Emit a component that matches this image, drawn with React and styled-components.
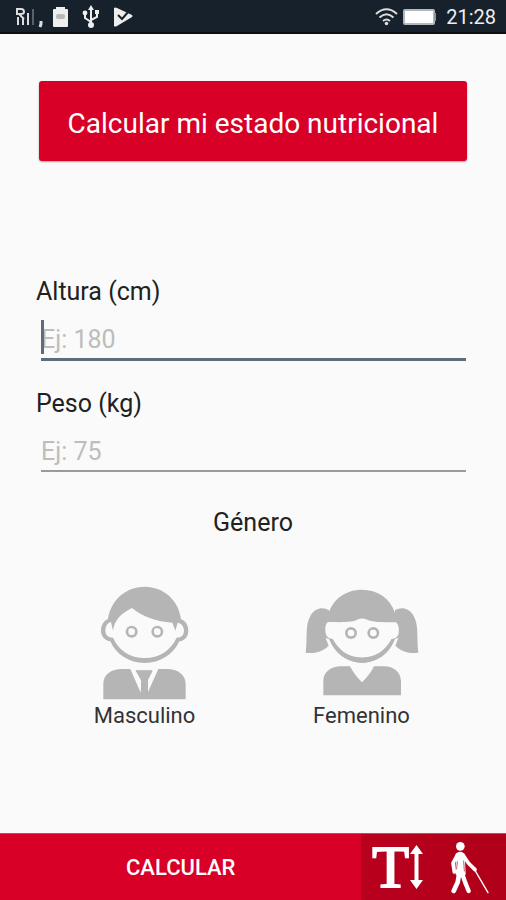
import React, { useState } from 'react'
import styled, { createGlobalStyle } from 'styled-components'

const GlobalStyle = createGlobalStyle`
  * {
    box-sizing: border-box;
  }
  body {
    margin: 0;
    background: #fafafa;
    font-family: Roboto, "Liberation Sans", sans-serif;
  }
  button {
    border: none;
    padding: 0;
    font-family: inherit;
    cursor: pointer;
  }
`

const Screen = styled.div`
  display: flex;
  flex-direction: column;
  min-height: 100vh;
`

const StatusBar = styled.header`
  display: flex;
  justify-content: space-between;
  align-items: center;
  height: 34px;
  padding: 2px 10px 0 16px;
  background: #17212b;
  border-bottom: 2px solid #0a0f14;
  color: #eee;
`

const StatusGroup = styled.div`
  display: flex;
  align-items: center;
  gap: ${({ $gap }) => $gap}px;
`

const Clock = styled.span`
  margin-left: 6px;
  font-size: 20px;
  line-height: 30px;
`

const Content = styled.main`
  flex: 1;
  display: flex;
  flex-direction: column;
  padding: 47px 36px 24px;
`

const TitleButton = styled.button`
  height: 80px;
  margin: 0 3px 113px;
  padding-top: 4px;
  background: #d80027;
  border-radius: 3px;
  box-shadow: 0 1px 2px rgba(0, 0, 0, 0.35);
  color: #fff;
  font-size: 28px;
`

const Field = styled.div`
  display: flex;
  flex-direction: column;
  height: 112px;
`

const FieldLabel = styled.label`
  color: #212121;
  font-size: 25px;
  line-height: 36px;
`

const InputWrap = styled.div`
  position: relative;
  margin: 6px 4px 0 5px;
`

const NumberInput = styled.input`
  display: block;
  width: 100%;
  height: ${({ $active }) => ($active ? 45 : 44)}px;
  padding: 4px 0 0;
  border: none;
  border-bottom: ${({ $active }) => ($active ? '3px solid #5f6d7a' : '2px solid #9a9a9a')};
  border-radius: 0;
  outline: none;
  background: transparent;
  color: #212121;
  caret-color: transparent;
  font-family: inherit;
  font-size: 25px;

  &::placeholder {
    color: #bdbdbd;
    opacity: 1;
  }
`

const Caret = styled.span`
  position: absolute;
  left: 0;
  top: 4px;
  width: 3px;
  height: 34px;
  background: #5f6d7a;
`

const GenderGroup = styled.fieldset`
  margin: 7px 0 0;
  padding: 0;
  border: none;
`

const GenderTitle = styled.legend`
  width: 100%;
  padding: 0;
  color: #212121;
  font-size: 25px;
  line-height: 36px;
  text-align: center;
`

const GenderRow = styled.div`
  display: grid;
  grid-template-columns: 1fr 1fr;
  margin-top: 43px;
`

const GenderOption = styled.label`
  display: flex;
  flex-direction: column;
  align-items: center;
  color: #333;
  font-size: 22px;
  line-height: 32px;
  cursor: pointer;

  svg {
    display: block;
  }
`

const HiddenRadio = styled.input`
  position: absolute;
  opacity: 0;
  pointer-events: none;
`

const Figure = styled.span`
  display: flex;
  align-items: flex-end;
  height: 116px;
  padding-bottom: ${({ $lift }) => $lift}px;
`

const BottomBar = styled.footer`
  display: flex;
  height: 67px;
  background: #d80027;
  border-top: 1px solid #c24a58;
`

const CalculateButton = styled.button`
  flex: 5;
  background: #d80027;
  color: #fff;
  font-size: 22px;
  font-weight: 500;
`

const Tools = styled.div`
  flex: 2;
  display: grid;
  grid-template-columns: 1fr 1fr;
  background: linear-gradient(to right, #b9001e, #b0001a);
`

const ToolButton = styled.button`
  display: flex;
  justify-content: center;
  align-items: center;
  gap: 1px;
  background: transparent;
  color: #fff;
`

const BigLetter = styled.span`
  font-family: "Liberation Serif", serif;
  font-size: 60px;
  line-height: 64px;
  -webkit-text-stroke: 2px #fff;
`

const BG = '#fafafa'
const GREY = '#b5b5b5'

function SignalIcon() {
  return (
    <svg width="29" height="22" viewBox="0 0 29 22" fill="none" stroke="#ddd" aria-hidden="true">
      <path d="M1 9V3H5Q8 3 8 6Q8 8 5 8H3L8 13" strokeWidth="2" />
      <path d="M2 19V11M7 19V12M12 19V7" strokeWidth="2" />
      <path d="M17 19V3" stroke="#56616b" strokeWidth="2" />
      <path d="M25 15V18L24 21" strokeWidth="3" />
    </svg>
  )
}

function CardIcon() {
  return (
    <svg width="15" height="20" viewBox="0 0 15 20" aria-hidden="true">
      <path d="M3 0H12V2H14Q15 2 15 3V19Q15 20 14 20H1Q0 20 0 19V3Q0 2 1 2H3Z" fill="#eee" />
      <rect x="3" y="7" width="9" height="5" rx="2" fill="#b9b9b9" />
    </svg>
  )
}

function UsbIcon() {
  return (
    <svg width="18" height="24" viewBox="0 0 18 24" fill="none" stroke="#eee" strokeWidth="2" aria-hidden="true">
      <path d="M9 20V3M9 17L3 13V8M9 15L15 12V7" />
      <path d="M9 0L12 5H6Z" fill="#eee" stroke="none" />
      <circle cx="9" cy="20" r="3" fill="#eee" stroke="none" />
      <circle cx="3" cy="8" r="2.4" fill="#eee" stroke="none" />
      <rect x="13" y="5" width="4" height="4" fill="#eee" stroke="none" />
    </svg>
  )
}

function PlayIcon() {
  return (
    <svg width="19" height="20" viewBox="0 0 19 20" aria-hidden="true">
      <path d="M0 1Q1 0 3 1L18 8Q19 9 18 10L3 19Q1 20 0 19Z" fill="#eee" />
      <path d="M4 8L8 12L15 4" fill="none" stroke="#17212b" strokeWidth="2" />
    </svg>
  )
}

function WifiIcon() {
  return (
    <svg width="23" height="18" viewBox="0 0 23 18" fill="none" stroke="#ddd" strokeWidth="2" aria-hidden="true">
      <path d="M1 6Q11.5 -3.500 22 6" />
      <path d="M4.500 9.500Q11.500 3 18.500 9.500" />
      <path d="M8 13Q11.500 10 15 13" />
      <circle cx="11.500" cy="15.500" r="1.800" fill="#ddd" stroke="none" />
    </svg>
  )
}

function BatteryIcon() {
  return (
    <svg width="34" height="16" viewBox="0 0 34 16" aria-hidden="true">
      <rect x="2" y="1" width="30" height="14" rx="1" fill="#fff" stroke="#b4b8bb" strokeWidth="2" />
      <rect x="32" y="4" width="2" height="8" fill="#8f969b" />
    </svg>
  )
}

function Eye({ cx, cy }) {
  return (
    <>
      <circle cx={cx} cy={cy} r="18" fill={GREY} />
      <circle cx={cx} cy={cy} r="10" fill={BG} />
      <circle cx={cx - 4} cy={cy - 5} r="5" fill={BG} />
    </>
  )
}

function BoyIcon() {
  return (
    <svg width="90" height="115" viewBox="60 45 270 345" fill={GREY} aria-hidden="true">
      <path d="M194 50C252 50 297 92 303 148C318 152 325 168 325 182C325 200 312 213 298 214C280 254 240 279 194 279C148 279 108 254 91 214C76 212 63 200 63 182C63 166 71 152 84 147C92 92 136 50 194 50Z" />
      <path d="M156 114C184 138 224 154 277 158L286 182L293 158C306 160 312 172 312 182C312 194 304 203 290 203C272 241 238 264 194 264C150 264 116 241 99 203C84 203 76 194 76 182C76 170 82 158 93 156L99 182C104 148 124 130 156 114Z" fill={BG} />
      <Eye cx={155} cy={185} />
      <Eye cx={232} cy={185} />
      <path d="M70 388V340C70 312 96 297 125 297H262C292 297 317 314 317 342V388Z" />
      <path d="M150 295H236L203 368V330L217 301H167L184 330L182 368Z" fill={BG} />
      <path d="M167 302H218L204 330V370H183V330Z" />
    </svg>
  )
}

function GirlIcon() {
  return (
    <svg width="115" height="108" viewBox="28 55 345 324" fill={GREY} aria-hidden="true">
      <path d="M103 122C85 110 62 115 49 135C30 166 39 202 33 249C60 254 90 245 106 222L104 160Z" />
      <path d="M301 122C319 110 342 115 355 135C374 166 365 202 371 249C344 254 314 245 298 222L300 160Z" />
      <path d="M202 60C248 60 286 85 301 130L302 205C285 252 245 279 202 279C160 279 120 252 103 205L102 130C117 85 156 60 202 60Z" />
      <path d="M104 208L93 205L107 240L116 234Z" fill={BG} />
      <path d="M300 208L311 205L297 240L288 234Z" fill={BG} />
      <path d="M100 157C150 158 175 158 190 149Q202 144 214 149C232 158 260 158 304 158C312 165 314 178 312 190C310 202 302 207 291 208C272 245 240 264 202 264C164 264 133 245 114 208C100 208 92 197 92 182C92 168 94 162 100 157Z" fill={BG} />
      <Eye cx={169} cy={190} />
      <Eye cx={236} cy={190} />
      <path d="M86 377V333C86 305 112 290 138 290H166C176 308 188 325 202 338C216 325 229 308 238 290H268C298 290 319 308 319 336V377Z" />
      <path d="M103 207C120 252 160 279 202 279C245 279 285 252 301 207L291 208C272 245 240 264 202 264C164 264 133 245 114 208Z" />
    </svg>
  )
}

function HeightArrowIcon() {
  return (
    <svg width="13" height="44" viewBox="0 0 13 44" fill="#fff" aria-hidden="true">
      <path d="M6.500 0L13 9H8.500V35H13L6.500 44L0 35H4.500V9H0Z" />
    </svg>
  )
}

function WalkerIcon() {
  return (
    <svg width="40" height="53" viewBox="333 60 120 159" fill="none" stroke="#fff" strokeLinecap="round" strokeLinejoin="round" aria-hidden="true">
      <circle cx="364" cy="76" r="13" fill="#fff" stroke="none" />
      <path d="M352 100Q364 88 375 100L378 160H352Z" fill="#fff" strokeWidth="4" />
      <path d="M355 102L342 126L346 153" strokeWidth="11" />
      <path d="M372 102L388 126L408 146" strokeWidth="11" />
      <path d="M360 160L356 184L344 210" strokeWidth="14" />
      <path d="M370 160L380 188L389 210" strokeWidth="13" />
      <path d="M355 122L353 144M374 120L376 150" stroke="#b0001a" strokeWidth="2" />
      <path d="M408 148L447 215" strokeWidth="4" />
    </svg>
  )
}

function App() {
  const [height, setHeight] = useState('')
  const [weight, setWeight] = useState('')
  const [active, setActive] = useState('height')
  const [gender, setGender] = useState('')

  return (
    <Screen>
      <GlobalStyle />
      <StatusBar>
        <StatusGroup $gap={14}>
          <StatusGroup $gap={8}>
            <SignalIcon />
            <CardIcon />
          </StatusGroup>
          <StatusGroup $gap={14}>
            <UsbIcon />
            <PlayIcon />
          </StatusGroup>
        </StatusGroup>
        <StatusGroup $gap={4}>
          <WifiIcon />
          <BatteryIcon />
          <Clock>21:28</Clock>
        </StatusGroup>
      </StatusBar>

      <Content>
        <TitleButton type="button">Calcular mi estado nutricional</TitleButton>

        <Field>
          <FieldLabel htmlFor="height">Altura (cm)</FieldLabel>
          <InputWrap>
            <NumberInput
              id="height"
              inputMode="numeric"
              placeholder="Ej: 180"
              value={height}
              $active={active === 'height'}
              onFocus={() => setActive('height')}
              onChange={event => setHeight(event.target.value)}
            />
            {active === 'height' && height === '' && <Caret />}
          </InputWrap>
        </Field>

        <Field>
          <FieldLabel htmlFor="weight">Peso (kg)</FieldLabel>
          <InputWrap>
            <NumberInput
              id="weight"
              inputMode="numeric"
              placeholder="Ej: 75"
              value={weight}
              $active={active === 'weight'}
              onFocus={() => setActive('weight')}
              onChange={event => setWeight(event.target.value)}
            />
            {active === 'weight' && weight === '' && <Caret />}
          </InputWrap>
        </Field>

        <GenderGroup>
          <GenderTitle>Género</GenderTitle>
          <GenderRow>
            <GenderOption>
              <HiddenRadio type="radio" name="gender" checked={gender === 'm'} onChange={() => setGender('m')} />
              <Figure $lift={0}><BoyIcon /></Figure>
              Masculino
            </GenderOption>
            <GenderOption>
              <HiddenRadio type="radio" name="gender" checked={gender === 'f'} onChange={() => setGender('f')} />
              <Figure $lift={4}><GirlIcon /></Figure>
              Femenino
            </GenderOption>
          </GenderRow>
        </GenderGroup>
      </Content>

      <BottomBar>
        <CalculateButton type="button">CALCULAR</CalculateButton>
        <Tools>
          <ToolButton type="button">
            <BigLetter>T</BigLetter>
            <HeightArrowIcon />
          </ToolButton>
          <ToolButton type="button">
            <WalkerIcon />
          </ToolButton>
        </Tools>
      </BottomBar>
    </Screen>
  )
}

export default App
